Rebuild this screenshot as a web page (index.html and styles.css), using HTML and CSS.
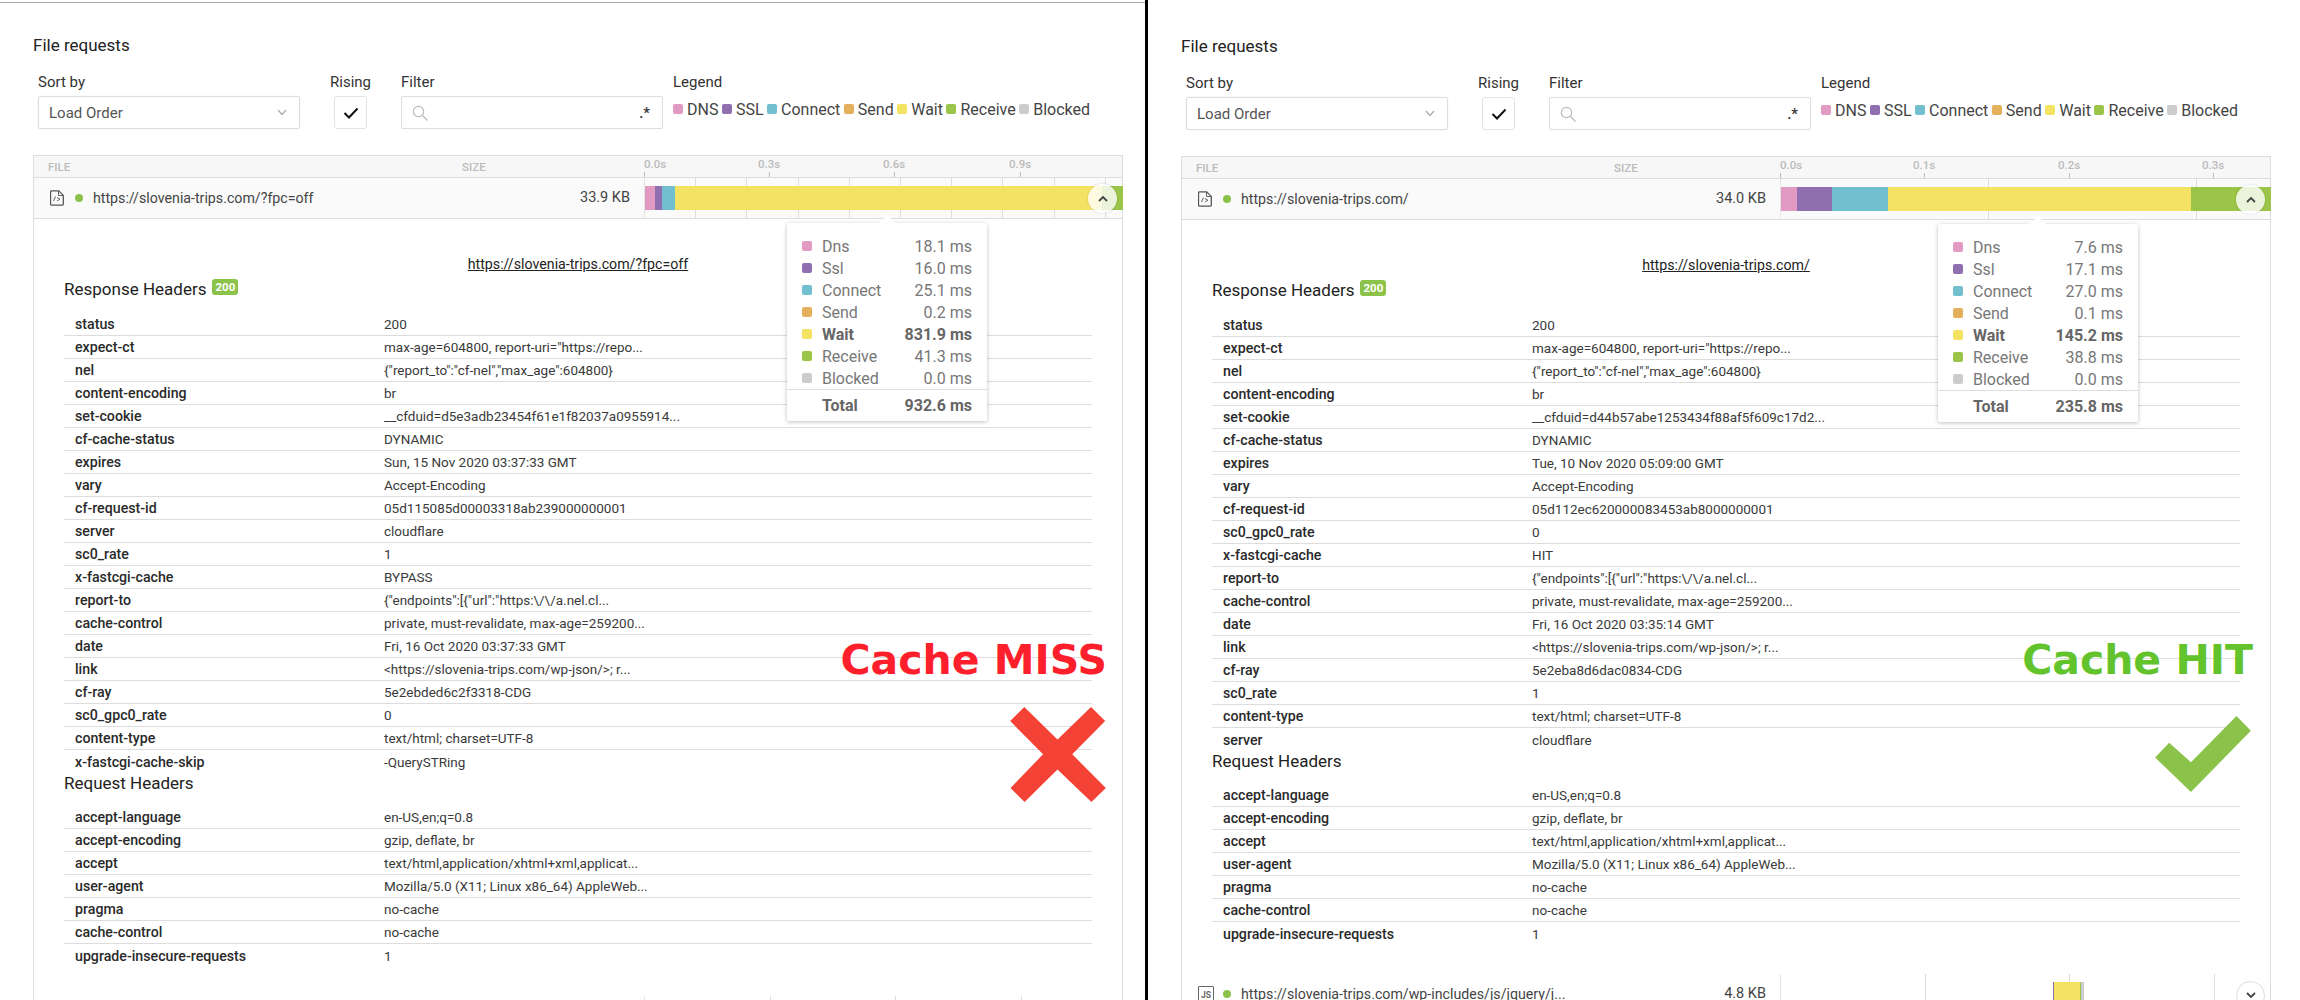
FILE: index.html
```html
<!DOCTYPE html>
<html lang="en">
<head>
<meta charset="utf-8">
<title>File requests</title>
<link rel="stylesheet" href="styles.css">
</head>
<body>
<div class="page">
  <section class="panel panel-miss">
    <h2 class="title">File requests</h2>
    <div class="controls">
      <div class="ctrl ctrl-sort"><label class="ctrl-label">Sort by</label>
        <div class="select"><span>Load Order</span><svg class="chev" viewBox="0 0 10 7"><path d="M1 1l4 4.5L9 1"/></svg></div></div>
      <div class="ctrl ctrl-rising"><label class="ctrl-label">Rising</label>
        <div class="check"><svg viewBox="0 0 16 12"><path d="M1.5 6l4.5 4.5L14.5 1.5"/></svg></div></div>
      <div class="ctrl ctrl-filter"><label class="ctrl-label">Filter</label>
        <div class="filter"><svg class="search" viewBox="0 0 16 16"><circle cx="6.5" cy="6.5" r="5.2"/><path d="M10.5 10.5l5 5"/></svg><span class="regex">.*</span></div></div>
      <div class="ctrl ctrl-legend"><label class="ctrl-label">Legend</label>
        <div class="legend">
          <span class="lg"><i class="sw dns"></i>DNS</span><span class="lg"><i class="sw ssl"></i>SSL</span><span class="lg"><i class="sw con"></i>Connect</span><span class="lg"><i class="sw snd"></i>Send</span><span class="lg"><i class="sw wai"></i>Wait</span><span class="lg"><i class="sw rec"></i>Receive</span><span class="lg"><i class="sw blk"></i>Blocked</span>
        </div></div>
    </div>
    <div class="table table-miss">
      <div class="thead">
        <div class="th-file">FILE</div><div class="th-size">SIZE</div>
        <div class="th-time">
          <span class="tick first" style="left:0">0.0s</span><span class="tick" style="left:125px">0.3s</span><span class="tick" style="left:250px">0.6s</span><span class="tick" style="left:376px">0.9s</span>
        </div>
      </div>
      <div class="frow">
        <div class="f-file">
          <svg class="ficon" viewBox="0 0 14 16"><path class="fo" d="M1.7.8h7l4.6 4.6v8.6a1.2 1.2 0 0 1-1.2 1.2H1.7A1.2 1.2 0 0 1 .5 14V2A1.2 1.2 0 0 1 1.7.8z"/><path class="fo thin" d="M8.5 1v4.5h4.5M3.5 11l2-4.5M10 9.2L7 7.5M10 9.2L7 11"/></svg>
          <i class="dot"></i><span class="furl">https://slovenia-trips.com/?fpc=off</span>
        </div>
        <div class="f-size">33.9 KB</div>
        <div class="f-time grid-miss">
          <div class="bar">
            <i class="dns" style="width:9.5px"></i><i class="ssl" style="width:7.5px"></i><i class="con" style="width:13px"></i><i class="wai" style="width:427px"></i><i class="rec" style="width:21px"></i>
          </div>
          <span class="toggle up"><svg viewBox="0 0 10 7"><path d="M1 6l4-4 4 4"/></svg></span>
        </div>
      </div>
      <div class="detail">
        <a class="durl">https://slovenia-trips.com/?fpc=off</a>
        <div class="tip tip-miss">
          <div class="tr"><i class="sw dns"></i><span>Dns</span><b>18.1 ms</b></div>
          <div class="tr"><i class="sw ssl"></i><span>Ssl</span><b>16.0 ms</b></div>
          <div class="tr"><i class="sw con"></i><span>Connect</span><b>25.1 ms</b></div>
          <div class="tr"><i class="sw snd"></i><span>Send</span><b>0.2 ms</b></div>
          <div class="tr strong"><i class="sw wai"></i><span>Wait</span><b>831.9 ms</b></div>
          <div class="tr"><i class="sw rec"></i><span>Receive</span><b>41.3 ms</b></div>
          <div class="tr"><i class="sw blk"></i><span>Blocked</span><b>0.0 ms</b></div>
          <div class="tr total"><i class="sw none"></i><span>Total</span><b>932.6 ms</b></div>
        </div>
        <h3 class="h-resp">Response Headers <span class="badge">200</span></h3>
        <dl class="hdrs">
          <div><dt>status</dt><dd>200</dd></div>
          <div><dt>expect-ct</dt><dd>max-age=604800, report-uri="https://repo...</dd></div>
          <div><dt>nel</dt><dd>{"report_to":"cf-nel","max_age":604800}</dd></div>
          <div><dt>content-encoding</dt><dd>br</dd></div>
          <div><dt>set-cookie</dt><dd>__cfduid=d5e3adb23454f61e1f82037a0955914...</dd></div>
          <div><dt>cf-cache-status</dt><dd>DYNAMIC</dd></div>
          <div><dt>expires</dt><dd>Sun, 15 Nov 2020 03:37:33 GMT</dd></div>
          <div><dt>vary</dt><dd>Accept-Encoding</dd></div>
          <div><dt>cf-request-id</dt><dd>05d115085d00003318ab239000000001</dd></div>
          <div><dt>server</dt><dd>cloudflare</dd></div>
          <div><dt>sc0_rate</dt><dd>1</dd></div>
          <div><dt>x-fastcgi-cache</dt><dd>BYPASS</dd></div>
          <div><dt>report-to</dt><dd>{"endpoints":[{"url":"https:\/\/a.nel.cl...</dd></div>
          <div><dt>cache-control</dt><dd>private, must-revalidate, max-age=259200...</dd></div>
          <div><dt>date</dt><dd>Fri, 16 Oct 2020 03:37:33 GMT</dd></div>
          <div><dt>link</dt><dd>&lt;https://slovenia-trips.com/wp-json/&gt;; r...</dd></div>
          <div><dt>cf-ray</dt><dd>5e2ebded6c2f3318-CDG</dd></div>
          <div><dt>sc0_gpc0_rate</dt><dd>0</dd></div>
          <div><dt>content-type</dt><dd>text/html; charset=UTF-8</dd></div>
          <div><dt>x-fastcgi-cache-skip</dt><dd>-QuerySTRing</dd></div>
        </dl>
        <h3 class="h-req">Request Headers</h3>
        <dl class="hdrs">
          <div><dt>accept-language</dt><dd>en-US,en;q=0.8</dd></div>
          <div><dt>accept-encoding</dt><dd>gzip, deflate, br</dd></div>
          <div><dt>accept</dt><dd>text/html,application/xhtml+xml,applicat...</dd></div>
          <div><dt>user-agent</dt><dd>Mozilla/5.0 (X11; Linux x86_64) AppleWeb...</dd></div>
          <div><dt>pragma</dt><dd>no-cache</dd></div>
          <div><dt>cache-control</dt><dd>no-cache</dd></div>
          <div><dt>upgrade-insecure-requests</dt><dd>1</dd></div>
        </dl>
        <div class="verdict verdict-miss">Cache MISS</div>
        <svg class="mark mark-x" viewBox="626 320 285 283"><polygon points="626,362 668,320 767,417 867,320 909,362 811,461 911,561 868,603 767,506 669,603 627,561 724,461"/></svg>
      </div>
      <div class="frow next">
        <div class="f-file"></div><div class="f-size"></div><div class="f-time grid-miss-next"></div>
      </div>
    </div>
  </section>
  <div class="divider"></div>
  <section class="panel panel-hit">
    <h2 class="title">File requests</h2>
    <div class="controls">
      <div class="ctrl ctrl-sort"><label class="ctrl-label">Sort by</label>
        <div class="select"><span>Load Order</span><svg class="chev" viewBox="0 0 10 7"><path d="M1 1l4 4.5L9 1"/></svg></div></div>
      <div class="ctrl ctrl-rising"><label class="ctrl-label">Rising</label>
        <div class="check"><svg viewBox="0 0 16 12"><path d="M1.5 6l4.5 4.5L14.5 1.5"/></svg></div></div>
      <div class="ctrl ctrl-filter"><label class="ctrl-label">Filter</label>
        <div class="filter"><svg class="search" viewBox="0 0 16 16"><circle cx="6.5" cy="6.5" r="5.2"/><path d="M10.5 10.5l5 5"/></svg><span class="regex">.*</span></div></div>
      <div class="ctrl ctrl-legend"><label class="ctrl-label">Legend</label>
        <div class="legend">
          <span class="lg"><i class="sw dns"></i>DNS</span><span class="lg"><i class="sw ssl"></i>SSL</span><span class="lg"><i class="sw con"></i>Connect</span><span class="lg"><i class="sw snd"></i>Send</span><span class="lg"><i class="sw wai"></i>Wait</span><span class="lg"><i class="sw rec"></i>Receive</span><span class="lg"><i class="sw blk"></i>Blocked</span>
        </div></div>
    </div>
    <div class="table table-hit">
      <div class="thead">
        <div class="th-file">FILE</div><div class="th-size">SIZE</div>
        <div class="th-time">
          <span class="tick first" style="left:0">0.0s</span><span class="tick" style="left:144px">0.1s</span><span class="tick" style="left:289px">0.2s</span><span class="tick" style="left:433px">0.3s</span>
        </div>
      </div>
      <div class="frow">
        <div class="f-file">
          <svg class="ficon" viewBox="0 0 14 16"><path class="fo" d="M1.7.8h7l4.6 4.6v8.6a1.2 1.2 0 0 1-1.2 1.2H1.7A1.2 1.2 0 0 1 .5 14V2A1.2 1.2 0 0 1 1.7.8z"/><path class="fo thin" d="M8.5 1v4.5h4.5M3.5 11l2-4.5M10 9.2L7 7.5M10 9.2L7 11"/></svg>
          <i class="dot"></i><span class="furl">https://slovenia-trips.com/</span>
        </div>
        <div class="f-size">34.0 KB</div>
        <div class="f-time grid-hit">
          <div class="bar">
            <i class="dns" style="width:16px"></i><i class="ssl" style="width:35px"></i><i class="con" style="width:56px"></i><i class="wai" style="width:303px"></i><i class="rec" style="width:80px"></i>
          </div>
          <span class="toggle up"><svg viewBox="0 0 10 7"><path d="M1 6l4-4 4 4"/></svg></span>
        </div>
      </div>
      <div class="detail">
        <a class="durl">https://slovenia-trips.com/</a>
        <div class="tip tip-hit">
          <div class="tr"><i class="sw dns"></i><span>Dns</span><b>7.6 ms</b></div>
          <div class="tr"><i class="sw ssl"></i><span>Ssl</span><b>17.1 ms</b></div>
          <div class="tr"><i class="sw con"></i><span>Connect</span><b>27.0 ms</b></div>
          <div class="tr"><i class="sw snd"></i><span>Send</span><b>0.1 ms</b></div>
          <div class="tr strong"><i class="sw wai"></i><span>Wait</span><b>145.2 ms</b></div>
          <div class="tr"><i class="sw rec"></i><span>Receive</span><b>38.8 ms</b></div>
          <div class="tr"><i class="sw blk"></i><span>Blocked</span><b>0.0 ms</b></div>
          <div class="tr total"><i class="sw none"></i><span>Total</span><b>235.8 ms</b></div>
        </div>
        <h3 class="h-resp">Response Headers <span class="badge">200</span></h3>
        <dl class="hdrs">
          <div><dt>status</dt><dd>200</dd></div>
          <div><dt>expect-ct</dt><dd>max-age=604800, report-uri="https://repo...</dd></div>
          <div><dt>nel</dt><dd>{"report_to":"cf-nel","max_age":604800}</dd></div>
          <div><dt>content-encoding</dt><dd>br</dd></div>
          <div><dt>set-cookie</dt><dd>__cfduid=d44b57abe1253434f88af5f609c17d2...</dd></div>
          <div><dt>cf-cache-status</dt><dd>DYNAMIC</dd></div>
          <div><dt>expires</dt><dd>Tue, 10 Nov 2020 05:09:00 GMT</dd></div>
          <div><dt>vary</dt><dd>Accept-Encoding</dd></div>
          <div><dt>cf-request-id</dt><dd>05d112ec620000083453ab8000000001</dd></div>
          <div><dt>sc0_gpc0_rate</dt><dd>0</dd></div>
          <div><dt>x-fastcgi-cache</dt><dd>HIT</dd></div>
          <div><dt>report-to</dt><dd>{"endpoints":[{"url":"https:\/\/a.nel.cl...</dd></div>
          <div><dt>cache-control</dt><dd>private, must-revalidate, max-age=259200...</dd></div>
          <div><dt>date</dt><dd>Fri, 16 Oct 2020 03:35:14 GMT</dd></div>
          <div><dt>link</dt><dd>&lt;https://slovenia-trips.com/wp-json/&gt;; r...</dd></div>
          <div><dt>cf-ray</dt><dd>5e2eba8d6dac0834-CDG</dd></div>
          <div><dt>sc0_rate</dt><dd>1</dd></div>
          <div><dt>content-type</dt><dd>text/html; charset=UTF-8</dd></div>
          <div><dt>server</dt><dd>cloudflare</dd></div>
        </dl>
        <h3 class="h-req">Request Headers</h3>
        <dl class="hdrs">
          <div><dt>accept-language</dt><dd>en-US,en;q=0.8</dd></div>
          <div><dt>accept-encoding</dt><dd>gzip, deflate, br</dd></div>
          <div><dt>accept</dt><dd>text/html,application/xhtml+xml,applicat...</dd></div>
          <div><dt>user-agent</dt><dd>Mozilla/5.0 (X11; Linux x86_64) AppleWeb...</dd></div>
          <div><dt>pragma</dt><dd>no-cache</dd></div>
          <div><dt>cache-control</dt><dd>no-cache</dd></div>
          <div><dt>upgrade-insecure-requests</dt><dd>1</dd></div>
        </dl>
        <div class="verdict verdict-hit">Cache HIT</div>
        <svg class="mark mark-check" viewBox="766 348 286 227"><polygon points="766,472 808,428 873,486 1009,348 1052,392 873,575"/></svg>
      </div>
      <div class="frow next">
        <div class="f-file">
          <span class="js-icon">JS</span>
          <i class="dot dot-js"></i><span class="furl">https://slovenia-trips.com/wp-includes/js/jquery/j...</span>
        </div>
        <div class="f-size">4.8 KB</div>
        <div class="f-time grid-hit-next">
          <div class="bar mini"><i class="ssl" style="width:1px"></i><i class="wai" style="width:26px"></i><i class="rec" style="width:1px"></i><i class="blk" style="width:3px"></i></div>
          <span class="toggle down"><svg viewBox="0 0 10 7"><path d="M1 1l4 4 4-4"/></svg></span>
        </div>
      </div>
    </div>
  </section>
</div>
</body>
</html>
```
FILE: styles.css
```css
* { box-sizing: border-box; }
html, body { margin: 0; padding: 0; }
body { width: 2300px; height: 1000px; overflow: hidden; background: #fff; font-family: Roboto, "Liberation Sans", sans-serif; font-size: 14px; color: #444; }
.page { display: flex; width: 2300px; height: 1000px; }
.panel { overflow: hidden; padding-left: 33px; }
.panel-miss { width: 1145px; border-top: 1px solid #aaa; margin-top: 2px; height: 998px; }
.panel-hit { width: 1152px; height: 1000px; padding-top: 4px; }
.divider { width: 3px; background: #000; height: 1000px; }

.title { margin: 0; font-size: 17px; line-height: 24px; font-weight: 400; color: #222; padding-top: 30px; box-sizing: content-box; }
.controls { display: flex; margin-top: 15px; height: 83px; }
.ctrl-label { display: block; height: 20px; line-height: 20px; font-size: 15px; color: #333; margin-bottom: 4px; }
.ctrl-sort { width: 297px; padding-left: 5px; }
.ctrl-rising { width: 71px; }
.ctrl-filter { width: 272px; }
.select { width: 262px; height: 33px; border: 1px solid #ddd; border-radius: 2px; box-shadow: 0 0 2px #eee; display: flex; align-items: center; justify-content: space-between; padding: 0 12px 0 10px; font-size: 15px; color: #555; }
.chev { width: 10px; height: 7px; }
.chev path { fill: none; stroke: #aaa; stroke-width: 1.2; }
.check { width: 33px; height: 33px; margin-left: 4px; border: 1px solid #e2e2e2; border-radius: 3px; display: flex; align-items: center; justify-content: center; }
.check svg { width: 16px; height: 12px; }
.check path { fill: none; stroke: #111; stroke-width: 2; }
.filter { width: 262px; height: 33px; border: 1px solid #ddd; border-radius: 2px; display: flex; align-items: center; justify-content: space-between; padding: 0 12px 0 10px; }
.search { width: 16px; height: 16px; }
.search circle, .search path { fill: none; stroke: #bbb; stroke-width: 1.2; }
.regex { font-size: 15px; font-weight: 500; color: #333; }
.legend { display: flex; gap: 3.5px; height: 26px; align-items: center; font-size: 16px; color: #444; white-space: nowrap; }
.lg { display: flex; align-items: center; gap: 4px; }
.sw { display: block; width: 10px; height: 10px; border-radius: 2px; flex: none; }
.dns { background: #e19bc2; }
.ssl { background: #8f6fb0; }
.con { background: #72bfd0; }
.snd { background: #e5b05c; }
.wai { background: #f4e362; }
.rec { background: #9ac548; }
.blk { background: #ccc; }
.none { background: transparent; }

.table { width: 1090px; border-left: 1px solid #ddd; border-right: 1px solid #ddd; border-top: 1px solid #ddd; }
.thead { display: flex; height: 22px; background: #f7f7f7; border-bottom: 1px solid #ddd; }
.th-file, .th-size { font-size: 11.5px; font-weight: 500; color: #bbb; line-height: 22px; }
.th-file { padding-left: 14px; }
.th-time { position: relative; }
.tick { position: absolute; top: 0; font-size: 11.5px; font-weight: 500; color: #bbb; line-height: 16px; transform: translateX(-50%); }
.tick.first { transform: none; }
.tick::after { content: ""; position: absolute; left: 50%; top: 16px; width: 1px; height: 5px; background: #bbb; }
.tick.first::after { left: 0; }

.frow { display: flex; height: 41px; background: #fafafa; border-bottom: 1px solid #ddd; }
.f-file { display: flex; align-items: center; padding-left: 16px; }
.ficon { width: 14px; height: 16px; flex: none; }
.fo { fill: none; stroke: #555; stroke-width: 1.3; }
.fo.thin { stroke-width: .9; }
.dot { width: 8px; height: 8px; border-radius: 50%; background: #8bc34a; margin: 0 10px 0 11px; flex: none; }
.furl { font-size: 14.2px; color: #444; white-space: nowrap; }
.f-size { text-align: right; font-size: 14.5px; line-height: 40px; color: #444; }
.f-time { position: relative; padding-top: 8px; background-repeat: repeat-x; }
.bar { display: flex; height: 24px; position: relative; }
.bar i { display: block; height: 24px; flex: none; }
.toggle { position: absolute; top: 6px; width: 29px; height: 29px; border-radius: 50%; background: rgba(255,255,255,.8); box-shadow: 0 0 2px rgba(0,0,0,.2); display: flex; align-items: center; justify-content: center; }
.toggle svg { width: 10px; height: 7px; }
.toggle path { fill: none; stroke: #444; stroke-width: 1.8; }

.table-miss .th-file, .table-miss .f-file { width: 428px; }
.table-miss .th-size { width: 182px; }
.table-miss .f-size { width: 168px; }
.table-miss .thead .th-time { width: 478px; }
.table-miss .f-time { width: 478px; margin-left: 14px; border-left: 1px solid #e5e5e5; }
.grid-miss { background-image: repeating-linear-gradient(90deg, transparent 0, transparent 50.2px, #ddd 50.2px, #ddd 51.2px); }
.grid-miss-next { background-image: repeating-linear-gradient(90deg, transparent 0, transparent 124.6px, #ddd 124.6px, #ddd 125.6px); }
.table-miss .toggle { right: 5px; }

.table-hit .th-file, .table-hit .f-file { width: 432px; }
.table-hit .th-size { width: 166px; }
.table-hit .f-size { width: 152px; }
.table-hit .thead .th-time { width: 490px; }
.table-hit .f-time { width: 490px; margin-left: 14px; border-left: 1px solid #e5e5e5; }
.grid-hit { background-image: repeating-linear-gradient(90deg, transparent 0, transparent 207px, #ddd 207px, #ddd 208px); }
.grid-hit-next { background-image: repeating-linear-gradient(90deg, transparent 0, transparent 143.6px, #ddd 143.6px, #ddd 144.6px); }
.table-hit .toggle { right: 5px; }

.detail { position: relative; padding: 0 30px 29px 30px; background: #fff; }
.durl { display: block; text-align: center; font-size: 14.2px; line-height: 20px; color: #222; text-decoration: underline; padding-top: 35px; box-sizing: content-box; }
.h-resp, .h-req { margin: 0; font-weight: 400; font-size: 17px; color: #222; line-height: 24px; display: flex; align-items: center; }
.h-resp { margin-top: 3px; height: 24px; }
.h-req { height: 22px; margin-top: -1px; margin-bottom: 12px; }
.badge { display: inline-block; margin-left: 6px; margin-top: -4px; background: #8bc34a; color: #fff; font-size: 11.5px; font-weight: 700; line-height: 16px; padding: 0 3px; border-radius: 3px; }
.hdrs { margin: 0; width: 1028px; }
.h-resp + .hdrs { margin-top: 12px; }
.hdrs > div { display: flex; height: 23px; border-bottom: 1px solid #ddd; align-items: center; padding-left: 11px; }
.hdrs > div:last-child { border-bottom: 0; }
.hdrs dt { width: 309px; font-weight: 500; font-size: 14.2px; color: #2a2a2a; }
.hdrs dd { margin: 0; font-size: 13.5px; color: #3a3a3a; white-space: nowrap; }

.tip { position: absolute; top: 4px; width: 200px; height: 198px; background: #fff; border-radius: 2px; box-shadow: 0 1px 4px rgba(0,0,0,.25); padding: 12px 15px 0 15px; font-size: 16px; color: #777; z-index: 3; }
.tip::before { content: ""; position: absolute; left: 50%; top: -8px; margin-left: -8px; width: 0; height: 0; border-left: 8px solid transparent; border-right: 8px solid transparent; border-bottom: 8px solid #fff; }
.tip-miss { left: 753px; }
.tip-hit { left: 756px; }
.tr { display: flex; align-items: center; height: 22px; gap: 10px; }
.tr span { flex: 1; }
.tr b { font-weight: 400; }
.tr.strong, .tr.strong b { font-weight: 700; color: #666; }
.tr.total { height: 32px; margin: 0 -15px; padding: 0 15px; border-top: 1px solid #ddd; font-weight: 700; color: #666; }
.tr.total b { font-weight: 700; }

.verdict { position: absolute; font-family: "DejaVu Sans", sans-serif; font-weight: 700; font-size: 41px; line-height: 44px; white-space: nowrap; z-index: 2; }
.verdict-miss { color: #fe1f2d; right: 15px; top: 419px; }
.verdict-hit { color: #63c32c; right: 17px; top: 418px; }
.mark { position: absolute; z-index: 2; }
.mark-x { width: 96px; height: 95px; top: 488px; left: 976px; fill: #f44336; }
.mark-check { width: 96px; height: 76px; top: 496px; left: 973px; fill: #8bc34a; }
.next { background: #fff; }
.bar.mini { margin-left: 272px; }
.toggle.down { background: #fff; box-shadow: none; border: 1px solid #ddd; top: 7px; }
.js-icon { width: 16px; height: 17px; flex: none; border: 1.5px solid #666; border-radius: 1px; font-size: 8.5px; font-weight: 700; line-height: 17px; text-align: center; color: #666; }
.dot-js { margin-left: 9px; }
```
